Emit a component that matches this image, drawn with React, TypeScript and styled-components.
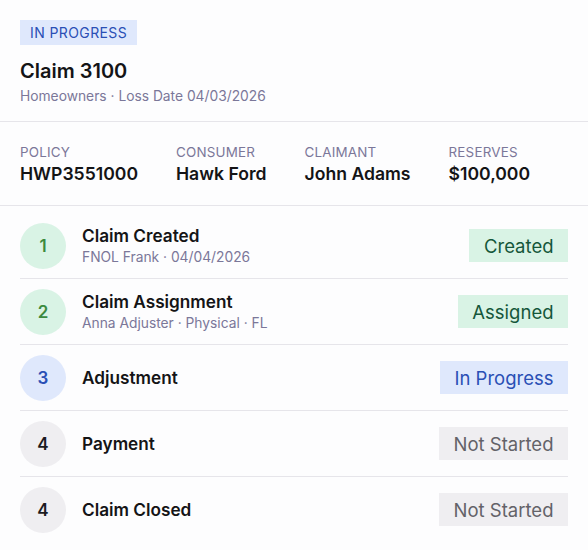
import React from 'react';
import styled, { createGlobalStyle } from 'styled-components';

type Tone = 'green' | 'blue' | 'gray';

interface IStep {
    num: number;
    title: string;
    meta?: string;
    status: string;
    tone: Tone;
}

const tones = {
    green: { bg: '#d9f3e5', pill: '#15573a', num: '#3c8a3f' },
    blue: { bg: '#dfe8fc', pill: '#2a4fb5', num: '#2a4fb5' },
    gray: { bg: '#efeef1', pill: '#636268', num: '#1b1b1f' },
};

const steps: IStep[] = [
    { num: 1, title: 'Claim Created', meta: 'FNOL Frank · 04/04/2026', status: 'Created', tone: 'green' },
    { num: 2, title: 'Claim Assignment', meta: 'Anna Adjuster · Physical · FL', status: 'Assigned', tone: 'green' },
    { num: 3, title: 'Adjustment', status: 'In Progress', tone: 'blue' },
    { num: 4, title: 'Payment', status: 'Not Started', tone: 'gray' },
    { num: 4, title: 'Claim Closed', status: 'Not Started', tone: 'gray' },
];

const facts = [
    { label: 'Policy', value: 'HWP3551000' },
    { label: 'Consumer', value: 'Hawk Ford' },
    { label: 'Claimant', value: 'John Adams' },
    { label: 'Reserves', value: '$100,000' },
];

const GlobalStyle = createGlobalStyle`
    body {
        margin: 0;
        background: #fdfdfe;
        font-family: Inter, "Noto Sans", sans-serif;
        color: #141416;
    }
`;

const StyledCard = styled.div`
    width: 588px;
    min-height: 550px;
    background: #fdfdfe;
`;

const StyledHeader = styled.div`
    padding: 20px 20px 15px;
    border-bottom: solid 1px #e6e5ea;
`;

const StyledBadge = styled.span`
    display: inline-block;
    padding: 4px 10px;
    background: #dfe8fc;
    color: #2a4fb5;
    font-size: 14px;
    line-height: 17px;
    letter-spacing: 0.4px;
`;

const StyledTitle = styled.h1`
    margin: 14px 0 3px;
    font-size: 20px;
    line-height: 24px;
    font-weight: 600;
`;

const StyledSub = styled.div`
    font-size: 13.8px;
    line-height: 20px;
    color: #7b7799;
`;

const StyledFacts = styled.div`
    display: flex;
    gap: 38px;
    padding: 22px 20px 20px;
    border-bottom: solid 1px #e6e5ea;
`;

const StyledFactLabel = styled.div`
    font-size: 13.4px;
    line-height: 16px;
    letter-spacing: 0.2px;
    color: #7b7799;
    text-transform: uppercase;
`;

const StyledFactValue = styled.div`
    margin-top: 3px;
    font-size: 17.6px;
    line-height: 22px;
    font-weight: 600;
`;

const StyledList = styled.div`
    padding: 7px 20px 0;
`;

const StyledRow = styled.div`
    box-sizing: border-box;
    display: flex;
    align-items: center;
    gap: 16px;
    height: 66px;
    border-bottom: solid 1px #e6e5ea;
    &:last-child {
        border-bottom: none;
        height: 65px;
    }
`;

const StyledCircle = styled.div<{ $tone: Tone }>`
    flex: none;
    width: 46px;
    height: 46px;
    border-radius: 50%;
    display: flex;
    align-items: center;
    justify-content: center;
    background: ${p => tones[p.$tone].bg};
    color: ${p => tones[p.$tone].num};
    font-size: 17px;
    font-weight: 600;
`;

const StyledStepText = styled.div`
    flex: 1;
`;

const StyledStepTitle = styled.div`
    font-size: 17.2px;
    line-height: 22px;
    font-weight: 600;
`;

const StyledPill = styled.span<{ $tone: Tone }>`
    padding: 0 14.5px;
    height: 33px;
    display: flex;
    align-items: center;
    background: ${p => tones[p.$tone].bg};
    color: ${p => tones[p.$tone].pill};
    font-size: 18.5px;
    font-weight: 400;
`;

const App = () => (
    <StyledCard>
        <GlobalStyle />
        <StyledHeader>
            <StyledBadge>IN PROGRESS</StyledBadge>
            <StyledTitle>Claim 3100</StyledTitle>
            <StyledSub>Homeowners · Loss Date 04/03/2026</StyledSub>
        </StyledHeader>

        <StyledFacts>
            {facts.map(f => (
                <div key={f.label}>
                    <StyledFactLabel>{f.label}</StyledFactLabel>
                    <StyledFactValue>{f.value}</StyledFactValue>
                </div>
            ))}
        </StyledFacts>

        <StyledList>
            {steps.map((s, i) => (
                <StyledRow key={i}>
                    <StyledCircle $tone={s.tone}>{s.num}</StyledCircle>
                    <StyledStepText>
                        <StyledStepTitle>{s.title}</StyledStepTitle>
                        {s.meta && <StyledSub>{s.meta}</StyledSub>}
                    </StyledStepText>
                    <StyledPill $tone={s.tone}>{s.status}</StyledPill>
                </StyledRow>
            ))}
        </StyledList>
    </StyledCard>
);

export default App;
